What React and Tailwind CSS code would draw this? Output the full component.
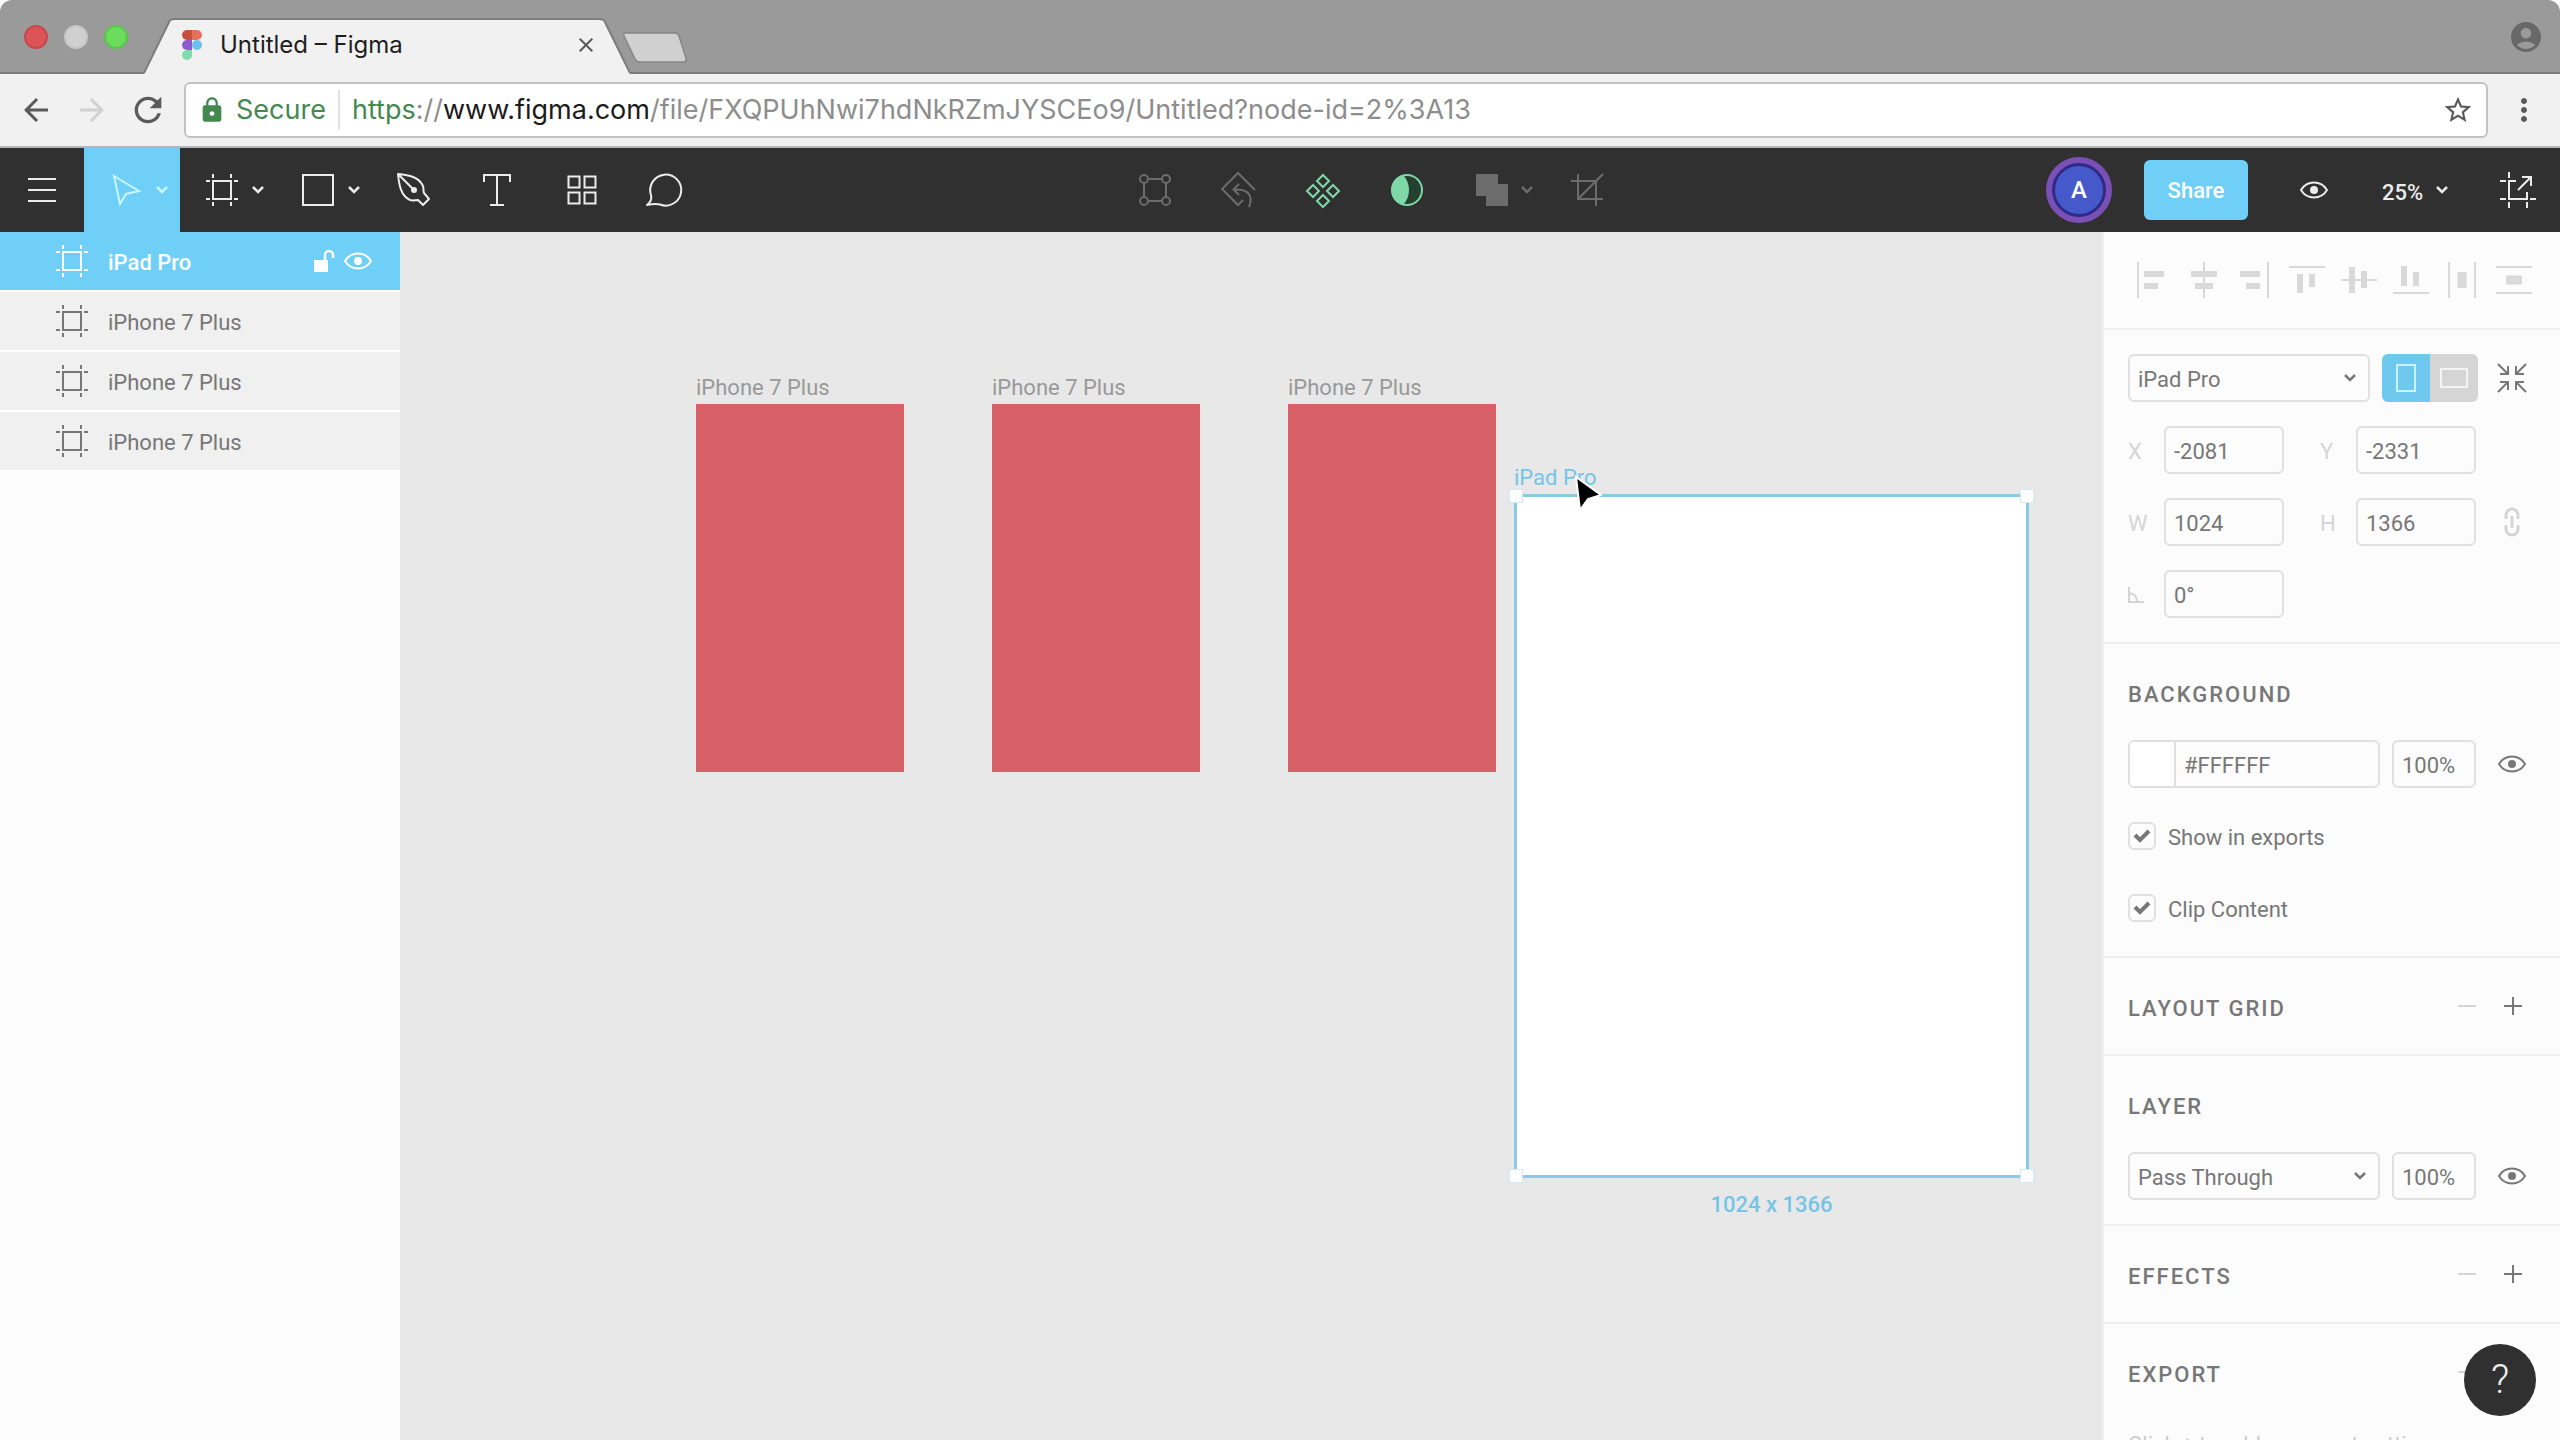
import React from "react";
import clsx from "clsx";
import { MdAccountCircle, MdArrowBack, MdArrowForward, MdRefresh, MdLock, MdStarBorder, MdMoreVert, MdClose } from "react-icons/md";

const Icon = ({ children, className, box = 36, stroke = 2 }) => (
  <svg
    viewBox={`0 0 ${box} ${box}`}
    fill="none"
    stroke="currentColor"
    strokeWidth={stroke}
    className={clsx("shrink-0 overflow-visible", className || "size-9")}
    aria-hidden="true"
  >
    {children}
  </svg>
);

const FrameIcon = () => (
  <Icon>
    <path d="M9 9h18v18H9zM9 2v4M27 2v4M9 30v4M27 30v4M2 9h4M30 9h4M2 27h4M30 27h4" />
  </Icon>
);

const EyeIcon = () => (
  <Icon className="size-7" box={28}>
    <path d="M1 14C7 4 21 4 27 14 21 24 7 24 1 14z" />
    <circle cx="14" cy="14" r="4" fill="currentColor" stroke="none" />
  </Icon>
);

const Chevron = ({ className }) => (
  <svg viewBox="0 0 12 8" fill="none" stroke="currentColor" strokeWidth="2.5" className={clsx("h-2 w-3 shrink-0", className)} aria-hidden="true">
    <path d="M1 1l5 5 5-5" />
  </svg>
);

const FigmaLogo = () => (
  <svg viewBox="0 0 20 30" className="h-[30px] w-5 shrink-0" aria-hidden="true">
    <path d="M10 0H5a5 5 0 0 0 0 10h5z" fill="#c9503f" />
    <path d="M10 0h5a5 5 0 0 1 0 10h-5z" fill="#e8705f" />
    <path d="M10 10H5a5 5 0 0 0 0 10h5z" fill="#8a5ccc" />
    <circle cx="15" cy="15" r="5" fill="#6cc0f0" />
    <path d="M10 20H5a5 5 0 1 0 5 5z" fill="#7fdba9" />
  </svg>
);

const TabStrip = () => (
  <div className="flex h-[74px] items-end bg-[#9a9a9a] shadow-[inset_0_-2px_0_#7e7e7e]">
    <div className="flex items-center gap-4 self-center pl-6">
      <button aria-label="Close window" className="size-6 rounded-full border-2 border-[#c9474c] bg-[#dc5358]" />
      <button aria-label="Minimize window" className="size-6 rounded-full border-2 border-[#c6c6c6] bg-[#d0d0d0]" />
      <button aria-label="Zoom window" className="size-6 rounded-full border-2 border-[#58c74c] bg-[#6bdc5b]" />
    </div>
    <div className="relative ml-4 h-14 w-[486px]">
      <svg viewBox="0 0 486 56" className="absolute inset-0 h-full w-full" aria-hidden="true">
        <path d="M0 56L26 4Q27 1 31 1H455Q459 1 460 4L486 56z" fill="#f1f1f1" />
        <path d="M0 55L25 4Q26 1 31 1H455Q460 1 461 4L486 55" fill="none" stroke="#7e7e7e" strokeWidth="2" />
      </svg>
      <div className="relative flex h-full items-center gap-[18px] pr-8 pb-0.5 pl-[38px]">
        <FigmaLogo />
        <span className="grow font-['Inter','Liberation_Sans',sans-serif] text-2xl text-[#1e1e1e]">Untitled – Figma</span>
        <button aria-label="Close tab" className="text-[#5a5a5a]"><MdClose className="size-6" /></button>
      </div>
    </div>
    <button aria-label="New tab" className="mb-2.5 -ml-2">
      <svg viewBox="0 0 66 32" className="h-8 w-[66px]" aria-hidden="true">
        <path d="M3 1h49q4 0 5 3l7 22q1 4-3 4H18q-4 0-5-3L2 4q-1-3 1-3z" fill="#d0d0d0" stroke="#858585" strokeWidth="1.5" />
      </svg>
    </button>
    <button aria-label="Profile" className="mr-4 ml-auto self-center text-[#686868]">
      <MdAccountCircle className="size-9" />
    </button>
  </div>
);

const AddressBar = () => (
  <div className="flex h-[74px] items-center border-b-2 border-[#b5b5b5] bg-[#f1f1f1] pl-2 font-['Inter','Liberation_Sans',sans-serif] text-[27px]">
    <button aria-label="Back" className="flex w-14 justify-center text-[#5a5a5a]"><MdArrowBack className="size-9" /></button>
    <button aria-label="Forward" className="flex w-14 justify-center text-[#d0d0d0]"><MdArrowForward className="size-9" /></button>
    <button aria-label="Reload" className="flex w-14 justify-center text-[#5a5a5a]"><MdRefresh className="size-10" /></button>
    <div className="ml-2 flex h-14 grow items-center rounded-md border-2 border-[#c2c2c2] bg-white px-3">
      <MdLock className="size-7 text-[#43894f]" />
      <span className="ml-2.5 text-[#43894f]">Secure</span>
      <span className="mx-3 h-10 w-0.5 bg-[#e2e2e2]" />
      <span className="grow whitespace-nowrap text-[#8d8d8d]">
        <span className="text-[#43894f]">https</span>://<span className="text-[#1b1b1b]">www.figma.com</span>/file/FXQPUhNwi7hdNkRZmJYSCEo9/Untitled?node-id=2%3A13
      </span>
      <button aria-label="Bookmark" className="text-[#5a5a5a]"><MdStarBorder className="size-8" /></button>
    </div>
    <button aria-label="Menu" className="flex w-[72px] justify-center text-[#5a5a5a]"><MdMoreVert className="size-9" /></button>
  </div>
);

const Tool = ({ label, children, menu, active, className }) => (
  <button
    aria-label={label}
    className={clsx("flex h-full items-center pl-6", menu ? "w-24 gap-3" : "w-[84px]", active && "bg-[#6fcff6]", className)}
  >
    {children}
    {menu ? <Chevron /> : null}
  </button>
);

const Toolbar = () => (
  <div className="flex h-[84px] shrink-0 items-center justify-between bg-[#303030] text-[#ececec]">
    <div className="flex h-full">
      <Tool label="Main menu">
        <Icon><path d="M4 7h28M4 18h28M4 29h28" /></Icon>
      </Tool>
      <Tool label="Move" menu active className="text-[#c9f5ff]">
        <Icon><path d="M6 4l25 15-13 3-6 10z" /></Icon>
      </Tool>
      <Tool label="Frame" menu><FrameIcon /></Tool>
      <Tool label="Rectangle" menu>
        <Icon><path d="M3 3h30v30H3z" /></Icon>
      </Tool>
      <Tool label="Pen">
        <Icon>
          <path d="M2 2C13 3 23 5 27 14c1 3 0 5 1 7l5 6-6 6-5-5c-3 0-5 1-8 0C5 24 3 13 2 2zL18 18" strokeLinejoin="round" />
          <circle cx="18" cy="18" r="3" fill="currentColor" stroke="none" />
        </Icon>
      </Tool>
      <Tool label="Text">
        <Icon><path d="M4 10V3h26v7M17 3v30M10 33h14" /></Icon>
      </Tool>
      <Tool label="Components">
        <Icon><path d="M4.5 4.5h11v11h-11zM20.5 4.5h11v11h-11zM4.5 20.5h11v11h-11zM20.5 20.5h11v11h-11z" /></Icon>
      </Tool>
      <Tool label="Comment">
        <Icon><path d="M-1 33c4-3 5-6 4-10A15.5 15.5 0 1 1 12 32.500c-4-1-8-.5-13 .5z" strokeLinejoin="round" /></Icon>
      </Tool>
    </div>

    <div className="flex h-full text-[#6c6c6c]">
      <Tool label="Edit object">
        <Icon>
          <path d="M11 7h14M11 29h14M7 11v14M29 11v14" />
          <circle cx="7" cy="7" r="4" />
          <circle cx="29" cy="7" r="4" />
          <circle cx="7" cy="29" r="4" />
          <circle cx="29" cy="29" r="4" />
        </Icon>
      </Tool>
      <Tool label="Reset instance">
        <Icon><path d="M34 18L17 1 1 17l16 16 5-5M13 17.500C26 17 33 22 28 35M18 12l-5.500 5.500L18 23" /></Icon>
      </Tool>
      <Tool label="Create component" className="text-[#7fd8a8]">
        <Icon><path d="M18 3l6 6-6 6-6-6zM8 13l6 6-6 6-6-6zM28 13l6 6-6 6-6-6zM18 23l6 6-6 6-6-6z" /></Icon>
      </Tool>
      <Tool label="Use as mask" className="text-[#7fd8a8]">
        <Icon>
          <circle cx="18" cy="18" r="15" fill="#24402f" />
          <path d="M14 3c8 8 8 22 0 30A15.500 15.500 0 0 1 14 3z" fill="currentColor" stroke="none" />
        </Icon>
      </Tool>
      <Tool label="Union" menu>
        <Icon><path d="M3 2h22v10h10v22H13V24H3z" fill="currentColor" stroke="none" /></Icon>
      </Tool>
      <Tool label="Crop">
        <Icon><path d="M2 9h25v25M9 2v25h25M9 27L34 2" /></Icon>
      </Tool>
    </div>

    <div className="flex h-full items-center font-medium">
      <button className="ml-3 flex size-[66px] items-center justify-center rounded-full border-6 border-[#7a4fb6] bg-[#2f2a86]">
        <span className="flex size-12 items-center justify-center rounded-full bg-[#4659cb] text-2xl text-white">A</span>
      </button>
      <button className="ml-8 h-[60px] w-[104px] rounded-md bg-[#6fcff6] text-white">Share</button>
      <button aria-label="View" className="ml-6 flex w-[84px] justify-center"><EyeIcon /></button>
      <div className="relative flex w-[120px] items-center">
        <select aria-label="Zoom" className="w-full appearance-none pt-1 pl-[26px]" defaultValue="25%">
          <option>25%</option>
          <option>50%</option>
          <option>100%</option>
        </select>
        <Chevron className="pointer-events-none absolute right-[28px]" />
      </div>
      <button aria-label="Export frame" className="flex w-[84px] justify-center">
        <Icon><path d="M16 9H9v18h18v-7M9 0v6M0 9h6M0 27h6M9 30v6M27 30v6M30 27h6M18 18L31 5M22 5h9v9" /></Icon>
      </button>
    </div>
  </div>
);

const layers = [
  { id: 1, name: "iPad Pro", selected: true },
  { id: 2, name: "iPhone 7 Plus" },
  { id: 3, name: "iPhone 7 Plus" },
  { id: 4, name: "iPhone 7 Plus" },
];

const Layers = () => (
  <ul className="w-[400px] shrink-0 bg-[#fdfdfd]">
    {layers.map(({ id, name, selected }) => (
      <li
        key={id}
        className={clsx(
          "flex h-15 items-center gap-[18px] border-b-2 border-white pr-7 pl-[54px]",
          selected ? "bg-[#6fcff6] font-medium text-white" : "bg-[#f0f0f0] text-[#777777]"
        )}
      >
        <FrameIcon />
        <span className="grow pt-0.5">{name}</span>
        {selected ? (
          <div className="flex items-center gap-2">
            <button aria-label="Lock">
              <Icon className="size-6" box={24} stroke={2.5}>
                <path d="M2 11h14v12H2z" fill="currentColor" stroke="none" />
                <path d="M13 12V6a4 4 0 0 1 8 0v3" />
              </Icon>
            </button>
            <button aria-label="Hide"><EyeIcon /></button>
          </div>
        ) : null}
      </li>
    ))}
  </ul>
);

const Phone = ({ className }) => (
  <div className={clsx("absolute top-[140px] w-[208px]", className)}>
    <div className="h-8 leading-8 text-[#999999]">iPhone 7 Plus</div>
    <div className="h-[368px] bg-[#d75f68]" />
  </div>
);

const Handle = ({ className }) => <span className={clsx("absolute size-3.5 border border-[#d3e9f4] bg-white", className)} />;

const Canvas = () => (
  <div className="relative grow overflow-hidden bg-[#e8e8e8]">
    <Phone className="left-[296px]" />
    <Phone className="left-[592px]" />
    <Phone className="left-[888px]" />
    <div className="absolute top-[230px] left-[1114px] w-[515px] text-[#74c5e6]">
      <div className="h-8 leading-8">iPad Pro</div>
      <div className="relative h-[684px] border-3 border-[#8acbe4] bg-white">
        <Handle className="-top-2 -left-2" />
        <Handle className="-top-2 -right-2" />
        <Handle className="-bottom-2 -left-2" />
        <Handle className="-right-2 -bottom-2" />
      </div>
      <div className="pt-2.5 text-center font-medium">1024 x 1366</div>
    </div>
    <svg viewBox="0 0 28 40" className="absolute top-[243px] left-[1174px] h-10 w-7" aria-hidden="true">
      <path d="M2 2l4 33 8-11 13-4z" fill="#000" stroke="#fff" strokeWidth="2" />
    </svg>
  </div>
);

const alignments = [
  ["Align left", "M10 12h20M10 24h14", "M4 0v36"],
  ["Align horizontal centers", "M5 12h26M9 24h18", "M18 0v36"],
  ["Align right", "M3 12h20M9 24h14", "M31 0v36"],
  ["Align top", "M11 12v19M23 12v13", "M0 5h36"],
  ["Align vertical centers", "M11 5v26M23 9v17", "M0 18h36"],
  ["Align bottom", "M11 4v20M23 10v14", "M0 31h36"],
  ["Distribute horizontal", "M18 10v16", "M5 0v36M31 0v36"],
  ["Distribute vertical", "M10 18h16", "M0 5h36M0 31h36"],
];

const AlignBar = () => (
  <div className="flex h-[98px] items-center justify-between border-b-2 border-[#f0f0f0] pr-7 pl-[30px] text-[#d9d9d9]">
    {alignments.map(([label, bars, rule]) => (
      <button key={label} aria-label={label}>
        <Icon>
          <path d={bars} strokeWidth={label.startsWith("Distribute") ? 9 : 6} />
          <path d={rule} />
        </Icon>
      </button>
    ))}
  </div>
);

const Section = ({ children }) => <section className="flex flex-col gap-6 border-b-2 border-[#f0f0f0] p-6">{children}</section>;

const Row = ({ children }) => <div className="flex h-12 items-center">{children}</div>;

const IconCell = ({ label, children, muted }) => (
  <button aria-label={label} className={clsx("ml-auto flex w-12 justify-center", muted && "text-[#d5d5d5]")}>
    {children}
  </button>
);

const Field = ({ label, text, value, className }) => (
  <label className={clsx("flex items-center", className)}>
    <span className="w-9 pt-0.5 text-[#d5d5d5]">{text}</span>
    <input aria-label={label} defaultValue={value} className="h-12 w-[120px] rounded-md border-2 border-[#e0e0e0] px-2 pt-0.5" />
  </label>
);

const Percent = ({ label }) => (
  <input aria-label={label} defaultValue="100%" className="ml-3 h-12 w-[84px] rounded-md border-2 border-[#e0e0e0] px-2 pt-0.5" />
);

const Select = ({ label, value, className }) => (
  <div className={clsx("relative flex items-center", className)}>
    <select aria-label={label} defaultValue={value} className="h-12 w-full appearance-none rounded-md border-2 border-[#e0e0e0] px-2 pt-0.5">
      <option>{value}</option>
    </select>
    <Chevron className="pointer-events-none absolute right-3.5" />
  </div>
);

const Checkbox = ({ label }) => (
  <label className="flex items-center gap-3">
    <span className="relative flex size-7 items-center justify-center">
      <input type="checkbox" defaultChecked className="peer absolute inset-0 appearance-none rounded-md border-2 border-[#e0e0e0]" />
      <svg viewBox="0 0 18 14" fill="none" stroke="currentColor" strokeWidth="4" className="relative hidden h-3.5 w-[18px] peer-checked:block" aria-hidden="true">
        <path d="M2 6l5 5 9-9" />
      </svg>
    </span>
    <span className="pt-0.5">{label}</span>
  </label>
);

const Heading = ({ children, actions }) => (
  <Row>
    <h2 className="grow pt-1 font-medium tracking-[2px]">{children}</h2>
    {actions ? (
      <>
        <button aria-label="Remove" className="mr-7 text-[#d5d5d5]">
          <Icon className="size-[18px]" box={18}><path d="M0 9h18" /></Icon>
        </button>
        <button aria-label="Add" className="mr-3.5">
          <Icon className="size-[18px]" box={18}><path d="M0 9h18M9 0v18" /></Icon>
        </button>
      </>
    ) : null}
  </Row>
);

const Properties = () => (
  <aside className="relative w-[458px] shrink-0 overflow-hidden border-l-2 border-[#efefef] bg-[#fcfcfc] text-[#777777]">
    <AlignBar />
    <Section>
      <Row>
        <Select label="Frame preset" value="iPad Pro" className="w-[242px]" />
        <div className="ml-3 flex h-12 overflow-hidden rounded-md">
          <button aria-label="Portrait" className="flex w-12 items-center justify-center bg-[#6fc8ee]">
            <span className="h-7 w-5 border-2 border-[#c4f4ff]" />
          </button>
          <button aria-label="Landscape" className="flex w-12 items-center justify-center bg-[#d5d5d5]">
            <span className="h-5 w-7 border-2 border-[#f4f4f4]" />
          </button>
        </div>
        <IconCell label="Resize to fit">
          <Icon className="size-[30px]" box={30}>
            <path d="M1 1l9 9M29 1l-9 9M1 29l9-9M29 29l-9-9M11 3v8H3M19 3v8h8M3 19h8v8M27 19h-8v8" />
          </Icon>
        </IconCell>
      </Row>
      <Row>
        <Field text="X" value="-2081" />
        <Field text="Y" value="-2331" className="ml-9" />
      </Row>
      <Row>
        <Field text="W" value="1024" />
        <Field text="H" value="1366" className="ml-9" />
        <IconCell label="Constrain proportions" muted>
          <Icon className="size-7" box={28} stroke={3}>
            <path d="M8 11V7a6 6 0 0 1 12 0v4M8 17v4a6 6 0 0 0 12 0v-4M14 8v12" />
          </Icon>
        </IconCell>
      </Row>
      <Row>
        <Field
          label="Rotation"
          value="0°"
          text={<Icon className="size-4" box={16}><path d="M1 0v15h15M1 6q8 1 8 9" /></Icon>}
        />
      </Row>
    </Section>
    <Section>
      <Heading>BACKGROUND</Heading>
      <Row>
        <div className="flex h-12 w-[252px] overflow-hidden rounded-md border-2 border-[#e0e0e0]">
          <button aria-label="Color" className="w-[46px] shrink-0 border-r-2 border-[#e0e0e0] bg-white" />
          <input aria-label="Hex" defaultValue="#FFFFFF" className="w-full px-2 pt-0.5" />
        </div>
        <Percent label="Background opacity" />
        <IconCell label="Toggle background"><EyeIcon /></IconCell>
      </Row>
      <Row><Checkbox label="Show in exports" /></Row>
      <Row><Checkbox label="Clip Content" /></Row>
    </Section>
    <Section>
      <Heading actions>LAYOUT GRID</Heading>
    </Section>
    <Section>
      <Heading>LAYER</Heading>
      <Row>
        <Select label="Blend mode" value="Pass Through" className="w-[252px]" />
        <Percent label="Layer opacity" />
        <IconCell label="Toggle layer"><EyeIcon /></IconCell>
      </Row>
    </Section>
    <Section>
      <Heading actions>EFFECTS</Heading>
    </Section>
    <Section>
      <Heading actions>EXPORT</Heading>
      <Row><p className="text-[#cccccc]">Click + to add an export setting</p></Row>
    </Section>
    <button className="absolute right-6 bottom-6 size-18 rounded-full bg-[#303030] text-[40px] font-light text-[#ececec]">?</button>
  </aside>
);

export default function App() {
  return (
    <div className="flex h-screen flex-col overflow-hidden bg-white font-['Roboto','Liberation_Sans',sans-serif] text-[22px]">
      <header className="shrink-0 overflow-hidden rounded-t-xl">
        <TabStrip />
        <AddressBar />
      </header>
      <Toolbar />
      <main className="flex min-h-0 grow">
        <Layers />
        <Canvas />
        <Properties />
      </main>
    </div>
  );
}
